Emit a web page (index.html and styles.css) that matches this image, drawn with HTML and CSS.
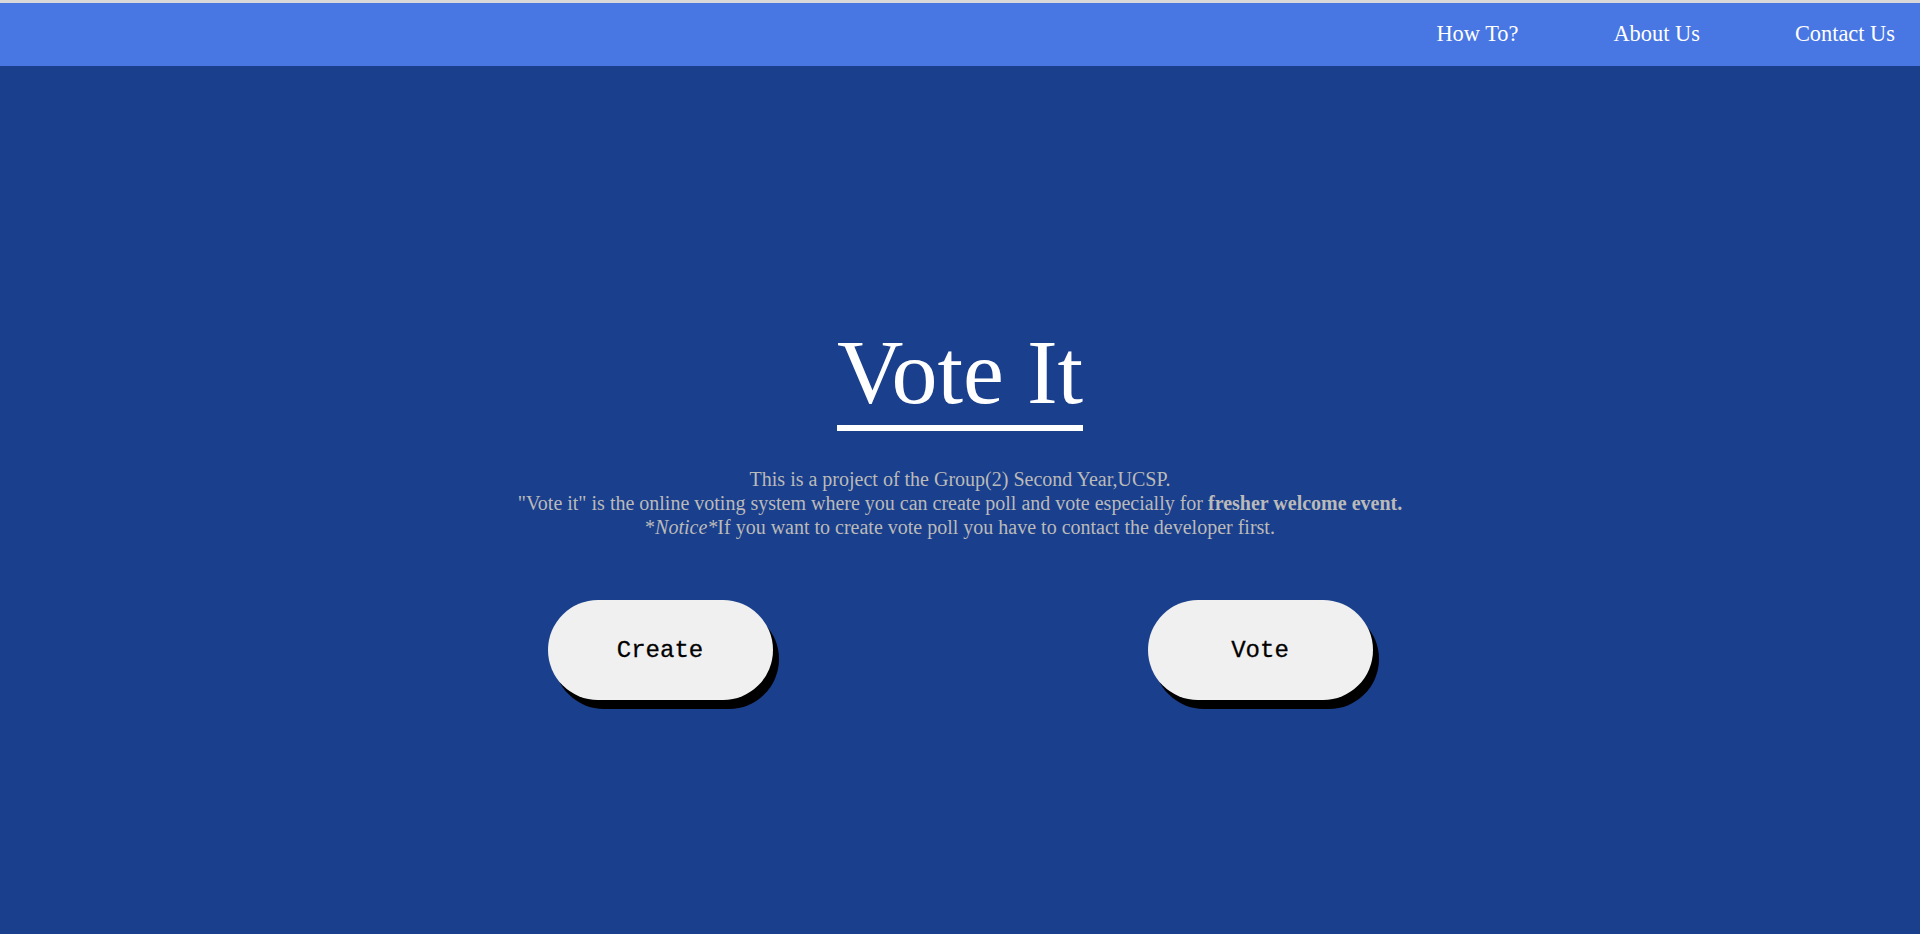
FILE: index.html
```html
<!DOCTYPE html>
<html lang="en">
<head>
<meta charset="utf-8">
<title>Vote It</title>
<link rel="stylesheet" href="styles.css">
</head>
<body>
<div class="topline"></div>
<nav class="nav">
  <a class="nav-link" href="#">How To?</a>
  <a class="nav-link" href="#">About Us</a>
  <a class="nav-link" href="#">Contact Us</a>
</nav>
<main class="main">
  <h1 class="title">Vote It</h1>
  <p class="intro">This is a project of the Group(2) Second Year,UCSP.<br>"Vote it" is the online voting system where you can create poll and vote especially for <b>fresher welcome event.</b><br>*<i>Notice*</i>If you want to create vote poll you have to contact the developer first.</p>
  <div class="actions">
    <button class="btn">Create</button>
    <button class="btn">Vote</button>
  </div>
</main>
</body>
</html>
```

FILE: styles.css
```css
html, body {
  margin: 0;
  padding: 0;
  height: 100%;
}
body {
  font-family: "Liberation Serif", "Times New Roman", serif;
  background: #1a3f8c;
  overflow: hidden;
}
.topline {
  height: 3px;
  background: #d9d9d9;
}
.nav {
  height: 63px;
  box-sizing: border-box;
  padding: 0 25px 2px 0;
  background: #4876e3;
  display: flex;
  justify-content: flex-end;
  align-items: center;
  gap: 95px;
}
.nav-link {
  color: #ffffff;
  text-decoration: none;
  font-size: 22.4px;
}
.main {
  display: flex;
  flex-direction: column;
  align-items: center;
  padding-top: 253px;
}
.title {
  display: inline-block;
  margin: 0;
  font-size: 92px;
  font-weight: normal;
  line-height: normal;
  color: #ffffff;
  border-bottom: 6px solid #ffffff;
}
.intro {
  margin: 36px 0 0;
  font-size: 20px;
  line-height: 24px;
  color: #bababa;
  text-align: center;
}
.actions {
  margin-top: 61px;
  width: 825px;
  display: flex;
  justify-content: space-between;
}
.btn {
  width: 225px;
  height: 100px;
  border: none;
  border-radius: 50px;
  background: #f0f0f0;
  box-shadow: 6px 9px 0 #000000;
  font-family: "Liberation Mono", "Courier New", monospace;
  font-size: 24px;
  font-weight: normal;
  -webkit-text-stroke: 0.3px #000000;
  color: #000000;
  padding: 0;
  cursor: pointer;
}
```
